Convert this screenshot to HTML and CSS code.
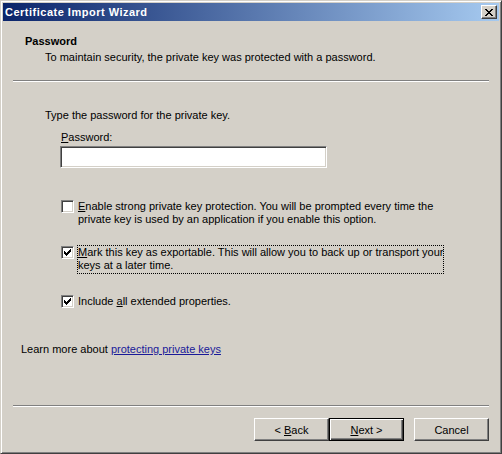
FILE: index.html
```html
<!DOCTYPE html>
<html lang="en">
<head>
  <meta charset="UTF-8">
  <title>Certificate Import Wizard</title>
  <link rel="stylesheet" href="styles.css">
</head>
<body>

  <div class="window">
    <div class="titlebar">
      <span class="title">Certificate Import Wizard</span>
      <span class="close">
        <svg width="8" height="7" viewBox="0 0 8 7" shape-rendering="crispEdges">
          <path d="M0 0h2v1H0zM6 0h2v1H6zM1 1h2v1H1zM5 1h2v1H5zM2 2h4v1H2zM3 3h2v1H3zM2 4h4v1H2zM1 5h2v1H1zM5 5h2v1H5zM0 6h2v1H0zM6 6h2v1H6z" fill="#000"/>
        </svg>
      </span>
    </div>

    <div class="header">
      <div class="heading">Password</div>
      <div class="subtitle">To maintain security, the private key was protected with a password.</div>
    </div>
    <div class="sep"></div>

    <div class="content">
      <p class="intro">Type the password for the private key.</p>
      <label class="field-label"><u>P</u>assword:</label>
      <div class="textbox"></div>

      <div class="check-row first">
        <span class="check"></span>
        <span class="check-label"><u>E</u>nable strong private key protection. You will be prompted every time the<br>private key is used by an application if you enable this option.</span>
      </div>
      <div class="check-row">
        <span class="check on">
          <svg width="7" height="7" viewBox="0 0 7 7" shape-rendering="crispEdges"><path d="M0 2h1v3H0zM1 3h1v3H1zM2 4h1v3H2zM3 3h1v3H3zM4 2h1v3H4zM5 1h1v3H5zM6 0h1v3H6z" fill="#000"/></svg>
        </span>
        <span class="check-label focus"><u>M</u>ark this key as exportable. This will allow you to back up or transport your<br>keys at a later time.</span>
      </div>
      <div class="check-row last">
        <span class="check on">
          <svg width="7" height="7" viewBox="0 0 7 7" shape-rendering="crispEdges"><path d="M0 2h1v3H0zM1 3h1v3H1zM2 4h1v3H2zM3 3h1v3H3zM4 2h1v3H4zM5 1h1v3H5zM6 0h1v3H6z" fill="#000"/></svg>
        </span>
        <span class="check-label">Include <u>a</u>ll extended properties.</span>
      </div>

      <p class="learn">Learn more about <a href="#">protecting private keys</a></p>
    </div>

    <div class="footer">
      <div class="sep"></div>
      <div class="buttons">
        <button class="btn">&lt; <u>B</u>ack</button>
        <button class="btn default"><u>N</u>ext &gt;</button>
        <button class="btn cancel">Cancel</button>
      </div>
    </div>
  </div>

</body>
</html>
```

FILE: styles.css
```css
body { margin: 0; padding: 0; background: #d4d0c8; font-family: "Liberation Sans", Arial, sans-serif; font-size: 11px; line-height: 13px; color: #000; }

.window { width: 502px; height: 454px; box-sizing: border-box; background: #d4d0c8; border: 1px solid; border-color: #d4d0c8 #404040 #404040 #d4d0c8; box-shadow: inset 1px 1px #fff, inset -1px -1px #808080; padding: 2px; display: flex; flex-direction: column; }

.titlebar { height: 18px; display: flex; align-items: center; justify-content: space-between; padding: 0 2px 0 2px; background: linear-gradient(to right, #0a246a, #a6caf0); }
.title { color: #fff; font-weight: bold; font-size: 11px; letter-spacing: 0.5px; }
.close { width: 16px; height: 14px; box-sizing: border-box; display: flex; align-items: center; justify-content: center; background: #d4d0c8; border: 1px solid; border-color: #fff #404040 #404040 #fff; box-shadow: inset -1px -1px #808080; }

.header { padding: 14px 0 0 22px; }
.heading { font-weight: bold; }
.subtitle { margin: 3px 0 0 20px; }

.sep { height: 1px; margin: 16px 10px 0 10px; background: #808080; border-bottom: 1px solid #fff; }

.content { flex: 1; padding-left: 42px; }
.intro { margin: 27px 0 0 0; }
.field-label { display: block; margin: 9px 0 0 16px; }
.textbox { width: 267px; height: 22px; box-sizing: border-box; margin: 2px 0 0 15px; background: #fff; border: 1px solid; border-color: #808080 #fff #fff #808080; box-shadow: inset 1px 1px #404040, inset -1px -1px #d4d0c8; }

.check-row { display: flex; align-items: flex-start; margin: 17px 0 0 16px; }
.check-row.first { margin-top: 31px; }
.check-row.last { margin-top: 20px; }
.check { width: 13px; height: 13px; box-sizing: border-box; margin-top: 1px; display: flex; align-items: center; justify-content: center; background: #fff; border: 1px solid; border-color: #808080 #fff #fff #808080; box-shadow: inset 1px 1px #404040, inset -1px -1px #d4d0c8; }
.check-label { margin-left: 3px; padding-bottom: 1px; border: 1px solid transparent; white-space: nowrap; }
.check-label.focus { border: 1px dotted #000; }

.learn { margin: 33px 0 0 -24px; }
.learn a { color: #1a1a99; }

.footer .sep { margin-top: 0; }
.buttons { display: flex; justify-content: flex-end; padding: 11px 10px 10px 0; }
.btn { width: 75px; height: 23px; box-sizing: border-box; padding: 0; font-family: "Liberation Sans", Arial, sans-serif; font-size: 11px; color: #000; background: #d4d0c8; border: 1px solid; border-color: #fff #404040 #404040 #fff; box-shadow: inset -1px -1px #808080; }
.btn.default { border-color: #000; box-shadow: inset 1px 1px #fff, inset -1px -1px #404040, inset -2px -2px #808080; }
.btn.cancel { margin-left: 10px; }
```
